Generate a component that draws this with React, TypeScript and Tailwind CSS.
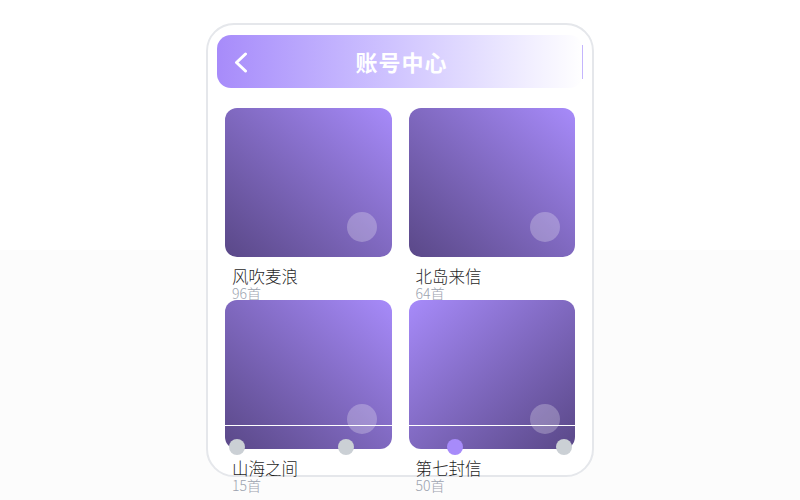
import React from 'react';

type Album = { title: string; count: number; flip?: boolean };

const albums: Album[] = [
  { title: '风吹麦浪', count: 96 },
  { title: '北岛来信', count: 64 },
  { title: '山海之间', count: 15 },
  { title: '第七封信', count: 50, flip: true },
];

function AlbumCard({ album }: { album: Album }) {
  return (
    <div className="h-[176px] flex flex-col">
      <div
        className={
          album.flip
            ? 'relative h-[149px] shrink-0 rounded-[12px] bg-gradient-to-br from-[#a78bfa] to-[#5a4888]'
            : 'relative h-[149px] shrink-0 rounded-[12px] bg-gradient-to-bl from-[#a78bfa] to-[#5a4888]'
        }
      >
        <div className="absolute right-[15px] bottom-[15px] w-[30px] h-[30px] rounded-full bg-white/25"></div>
      </div>
      <div className="pl-[7px] pt-[9px]">
        <p className="text-[16.5px] leading-[20px] font-light text-[#1f1f1f]">{album.title}</p>
        <p className="text-[14px] leading-[15px] font-light text-[#9ca3af]">{album.count}首</p>
      </div>
    </div>
  );
}

export default function App() {
  return (
    <div
      className="w-[800px] h-[500px] pt-[23px] bg-[linear-gradient(to_bottom,#ffffff_50%,#fcfcfc_50%)]"
      style={{ fontFamily: '"Noto Sans CJK SC", "Noto Sans", sans-serif' }}
    >
      <div className="relative mx-auto w-[388px] h-[454px] border-2 border-[#e5e7eb] rounded-[28px] bg-white px-[9px] pt-[10px]">
        {/* Header */}
        <div className="relative w-[366px] h-[53px] rounded-[14px] bg-gradient-to-r from-[#a78bfa] to-white flex items-center justify-center">
          <button className="absolute left-[17px] top-[17px] text-white">
            <svg width="14" height="21" viewBox="0 0 14 21" fill="none">
              <path d="M11.5 2 L2.5 10.5 L11.5 19" stroke="white" strokeWidth="3" strokeLinecap="round" strokeLinejoin="round" />
            </svg>
          </button>
          <h1 className="text-[22px] font-bold text-white tracking-[1px] pl-[3px]">账号中心</h1>
          <div className="absolute right-0 top-[10px] bottom-[9px] w-px bg-[#c4b5fd]"></div>
        </div>

        {/* Albums */}
        <div className="grid grid-cols-2 gap-x-[17px] gap-y-[16px] pl-[8px] pr-[8px] mt-[20px] w-[366px]">
          {albums.map((a) => (
            <AlbumCard key={a.title} album={a} />
          ))}
        </div>

        {/* Bottom bar */}
        <div className="absolute left-[11px] right-[10px] bottom-0 h-[50px] border-t border-white">
          <div className="flex justify-between px-[10px] pt-[13px]">
            <span className="w-4 h-4 rounded-full bg-[#cbd0d5]"></span>
            <span className="w-4 h-4 rounded-full bg-[#cbd0d5]"></span>
            <span className="w-4 h-4 rounded-full bg-[#a78bfa]"></span>
            <span className="w-4 h-4 rounded-full bg-[#cbd0d5]"></span>
          </div>
        </div>
      </div>
    </div>
  );
}
